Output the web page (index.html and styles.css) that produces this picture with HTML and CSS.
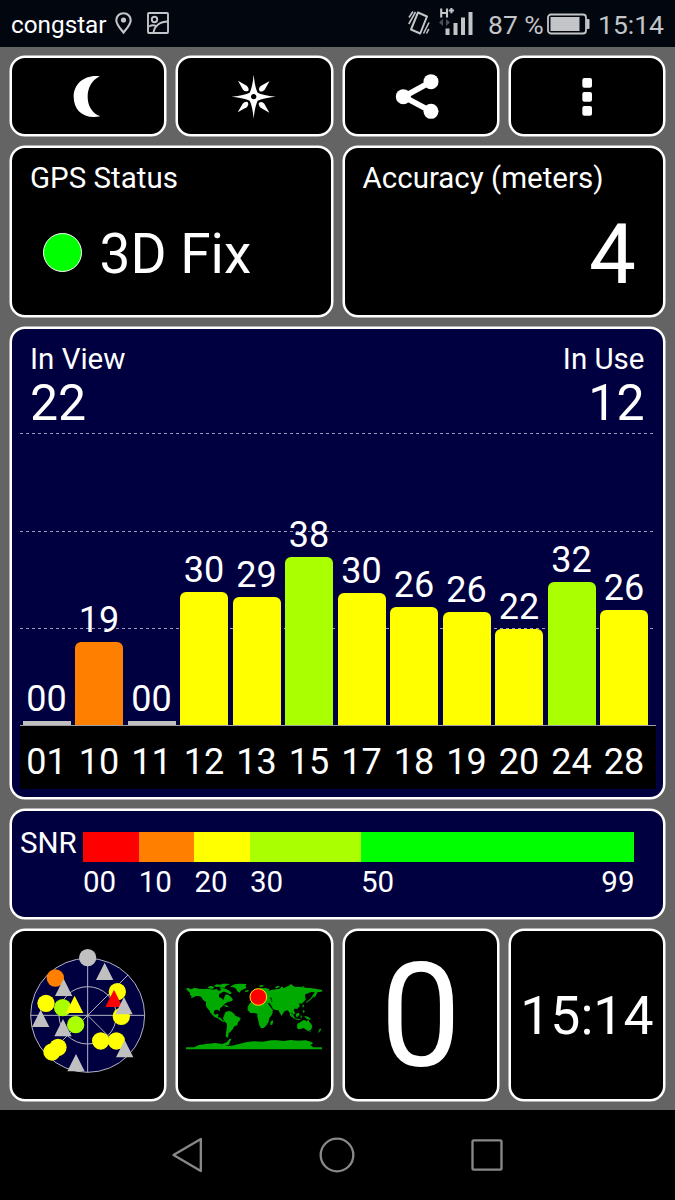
FILE: index.html
```
<!DOCTYPE html>
<html lang="en">
<head>
  <meta charset="UTF-8">
  <title>GPS Status</title>
  <link rel="stylesheet" href="styles.css">
</head>
<body>
<div class="statusbar">
  <span class="carrier">congstar</span>
  <svg class="pin" width="17" height="22" viewBox="0 0 17 22"><path d="M8.5 1.2C4.300 1.200 1.300 4.300 1.300 8.200C1.300 12.500 5 16 8.500 20.500C12 16 15.700 12.500 15.700 8.200C15.700 4.300 12.700 1.200 8.500 1.200Z" fill="none" stroke="#c3c5c8" stroke-width="2.1"/><circle cx="8.500" cy="8" r="2.600" fill="#c3c5c8"/></svg>
  <svg class="shot" width="22" height="22" viewBox="0 0 22 22"><g fill="none" stroke="#c3c5c8" stroke-width="1.900"><rect x="1" y="1" width="20" height="20" rx="1"/><circle cx="7.500" cy="7.500" r="2.700"/><path d="M6.500 20.500C7.500 14 13 9.500 21 9.500M2 14.500C5 12.800 8 13 10 15"/></g></svg>
  <div class="right">
    <svg class="vibrate" width="22" height="24" viewBox="0 0 22 24"><g fill="none" stroke="#c3c5c8" stroke-width="2" stroke-linejoin="round"><path d="M10 1.500L19 5.500L12.200 22.500L3 18.500Z"/><path d="M5 .5L1 6.500M7.500 1L.8 13M21 11.500L15.500 22.500M20.800 18L18.500 22.500" stroke-width="1.600"/></g></svg>
    <svg class="signal" width="35" height="28" viewBox="0 0 35 28"><path d="M2.200 .5V9.500M8 .5V9.500M2 5H8M9.800 2.500H15M12.400 0V5.200" fill="none" stroke="#c3c5c8" stroke-width="2.100"/><path d="M0 14.500L4 11V18ZM11 14.500L7 11V18Z" fill="#4d5157"/><path d="M6.500 20.500h4v6.500h-4zM14.500 15h4v12h-4zM22 9.500h4v17.500h-4zM29.500 4h4v23h-4z" fill="#c3c5c8"/></svg>
    <span class="percent">87 %</span>
    <svg class="battery" width="43" height="22" viewBox="0 0 43 22"><rect x="1" y="1.500" width="38" height="19" rx="3" fill="none" stroke="#c3c5c8" stroke-width="1.800"/><path d="M3.500 4h29v14h-29zM39.500 6h2a1 1 0 0 1 1 1v8a1 1 0 0 1 -1 1h-2z" fill="#c3c5c8"/></svg>
    <span class="clock">15:14</span>
  </div>
</div>

<div class="main">
  <div class="panel button">
    <svg class="icon" viewBox="194 218 140 140"><path d="M298 228C254 222 220 250 220 289C220 331 252 358 300 348C274 338 262 315 262 289C262 262 275 240 298 228Z"/></svg>
  </div>
  <div class="panel button">
    <svg class="icon" viewBox="693 218 140 140">
      <path fill-rule="evenodd" d="M761 223Q765 262 773 277Q788 285 827 289Q788 293 773 301Q765 316 761 355Q757 316 749 301Q734 293 695 289Q734 285 749 277Q757 262 761 223ZM761 281a8 8 0 1 0 .1 0Z"/>
      <path id="ray" d="M714 241L740 256Q748 263 745 271Q736 276 729 268Z"/>
      <use href="#ray" transform="rotate(90 761 289)"/>
      <use href="#ray" transform="rotate(180 761 289)"/>
      <use href="#ray" transform="rotate(270 761 289)"/>
    </svg>
  </div>
  <div class="panel button">
    <svg class="icon" viewBox="187 218 140 140"><path d="M289 244L207 289L289 333" fill="none" stroke="#fff" stroke-width="17"/><circle cx="206" cy="289" r="22.500"/><circle cx="289" cy="244" r="22.500"/><circle cx="289" cy="333" r="22.500"/></svg>
  </div>
  <div class="panel button">
    <svg class="icon" viewBox="686 218 140 140"><rect x="741" y="233" width="29" height="29" rx="6"/><rect x="741" y="275" width="29" height="29" rx="6"/><rect x="741" y="317" width="29" height="29" rx="6"/></svg>
  </div>

  <div class="panel half">
    <div class="label">GPS Status</div>
    <div class="fix"><span class="dot"></span>3D Fix</div>
  </div>
  <div class="panel half">
    <div class="label">Accuracy (meters)</div>
    <div class="accuracy">4</div>
  </div>

  <div class="panel chart">
    <div class="counts">
      <div>
        <div class="label">In View</div>
        <div class="count">22</div>
      </div>
      <div class="inuse">
        <div class="label">In Use</div>
        <div class="count">12</div>
      </div>
    </div>
    <div class="plot">
      <div class="sat">00<div class="bar none" style="height:4px"></div></div>
      <div class="sat">19<div class="bar orange" style="height:83px"></div></div>
      <div class="sat">00<div class="bar none" style="height:4px"></div></div>
      <div class="sat">30<div class="bar yellow" style="height:133.500px"></div></div>
      <div class="sat">29<div class="bar yellow" style="height:128px"></div></div>
      <div class="sat">38<div class="bar lime" style="height:168px"></div></div>
      <div class="sat">30<div class="bar yellow" style="height:132px"></div></div>
      <div class="sat">26<div class="bar yellow" style="height:118px"></div></div>
      <div class="sat">26<div class="bar yellow" style="height:113.500px"></div></div>
      <div class="sat">22<div class="bar yellow" style="height:96.500px"></div></div>
      <div class="sat">32<div class="bar lime" style="height:143px"></div></div>
      <div class="sat">26<div class="bar yellow" style="height:115px"></div></div>
    </div>
    <div class="axis">
      <span>01</span><span>10</span><span>11</span><span>12</span><span>13</span><span>15</span>
      <span>17</span><span>18</span><span>19</span><span>20</span><span>24</span><span>28</span>
    </div>
  </div>

  <div class="panel snr">
    <div class="snr-name">SNR</div>
    <div class="scale">
      <span class="seg red"></span><span class="seg orange"></span><span class="seg yellow"></span><span class="seg lime"></span><span class="seg green"></span>
      <span>00</span><span>10</span><span>20</span><span>30</span><span class="last"><span>50</span><span>99</span></span>
    </div>
  </div>

  <div class="panel tile">
    <svg width="116.670" height="136.670" viewBox="74 65 350 410">
      <circle cx="247" cy="270" r="171" fill="#000040"/>
      <g fill="none" stroke="#b4b4c4" stroke-width="3">
        <circle cx="247" cy="270" r="171"/>
        <circle cx="247" cy="270" r="86"/>
        <path d="M76 270H418M247 99V441M126 391L368 149M247 270L368 391"/>
      </g>
      <g fill="#ff0"><circle cx="336" cy="199" r="26"/><circle cx="348" cy="273" r="26"/></g>
      <circle cx="247" cy="97" r="26" fill="#c0c0c0"/>
      <circle cx="150" cy="158" r="26" fill="#ff8000"/>
      <g fill="#ff0"><circle cx="122" cy="234" r="26"/><circle cx="286" cy="347" r="26"/><circle cx="333" cy="347" r="26"/><circle cx="158" cy="366" r="26"/><circle cx="140" cy="380" r="26"/></g>
      <g fill="#aaff00"><circle cx="172" cy="247" r="26"/><circle cx="211" cy="298" r="26"/></g>
      <path d="M208 211l26 52h-52z" fill="#ff0"/>
      <path d="M326 193l26 52h-52z" fill="#f00"/>
      <path d="M298 112l26 52h-52zM175 160l26 52h-52zM106 253l26 52h-52zM173 281l26 52h-52zM356 215l26 52h-52zM358 344l26 52h-52zM212 386l26 52h-52z" fill="#c0c0c0"/>
    </svg>
  </div>
  <div class="panel tile">
    <svg class="world" width="137.330" height="68" viewBox="32 62 412 204">
      <g fill="#00aa00">
        <path d="M31 85l10-2 4 4 6-2 6-3 14 3 12 1 12-1 10 2 12 1 6-3 4 5 8 1 2-6 8 3 4 4-8 4-10 6 0 8 8 4 5 5 3-9 4-8 9 2 8 7 5 7-4 5-10 1-7 4-7 6-5 5-6 5-1 9-7-5-8 1-3 8 4 6 7-3 4 3-3 8 9 1 5 8 7 0-2 4-7-1-9-8-12-4-7-8-7-7-1-5-7-7-4-8 0-11-9-6-5-9-8-3-8 0-7 4-8 3 2-6-5-5 0-5z"/>
        <path d="M96 82l7-5 10 1 4 5-9 3zM116 76l8-4 12 1 6-3 16 0 6 2-12 4-4 6-12 0-4-3-10 1zM132 84l10-1 11 3 10 6 7 7-7 3-7-5-8-2-8-7zM168 77l10-5 14-2 22 1-3 4 2 8-6 3-9 4-6 7-6-4-5-9-7-3-9-1zM209 91l8-2 4 3-6 3-6-1zM145 134l9 1 7 6-8-1z"/>
        <path d="M151 154l10-2 8 2 8 7 3 5 8 3 8 4-2 7-6 6-2 9-9 3-5 9-7 8-5 3-1 10-3 5-5-6 1-10 2-12 1-14-8-8-4-10z"/>
        <path d="M221 132l6-6 0-10 11-1 1-7-6-2 1-10 9-7 12-5 16-1 12 4-4 6 8-4 15-2 10-1 8-8 5 6 11-6 13-4 10 6 14-1 14 3 18 1 16 2 20 4-2 5-13 2-4 10-7 6-1-9 4-7-9-1-10 3-9 4-1 8 3 7-7 7-6 6-7-1 1 9-6 7-10 0-2 5 5 9-7 4-2-7-5 3 6 13-7-6-3-10-5-6-9 2-6 9-3 6-5-8-5-9-10-2-5-1-2 6-7 6-6 2-5-9-8-10-1-6-9-2-6 2-6-4z"/>
        <path d="M222 131l13-5 14 0 7 4 9-1 12 3 5 12 7 10 4 0-4 11-7 8-2 11-6 10-8 9-9 1-5-9-3-14-3-12 0-9-9-2-12 0-8-9 0-10zM290 180l4 2-3 11-6 1 0-8zM228 107l4-8 3 5 3 8-9 2zM249 76l12-2 5 3-9 4zM299 80l10-4 5 2-10 7zM340 74l9-2 4 4-8 1zM376 80l9-2 5 3-8 1z"/>
        <path d="M414 101l3 0-5 11-7 7-11 8-2-2 11-8 6-7zM382 132l4 3-2 7-3-3zM384 149l5 4-4 5-3-4zM347 158l5 3 7 12-3 2-8-9zM362 160l8-3 3 5-6 8-6-2zM357 174l14 2 8 2-10 1-12-3zM377 164l3 4-2 7-3-5zM388 167l10 2 8 6-1 3-10-2-7-6z"/>
        <path d="M366 190l10-5 7-5 7 0 4 4 4-7 4 8 6 6 3 8-4 10-8 3-7-4-7-5-9 3-8 1-3-6zM402 212l4 0-2 5zM434 204l4 3-4 6-7 6 4-9z"/>
        <path d="M32 261H440V267H32ZM52 263l18-9 22-3 27-3 22 3 14-6 8-10 5 1-4 9-3 8-12 4 20-1 22-5 20-5 22-3 28 1 27-4 18 0 18 2 22-3 22 2 23-1 18 5 4 5-8 4 8 6 3 4z"/>
      </g>
      <circle cx="249" cy="110" r="25" fill="#f00" stroke="#ffe600" stroke-width="3"/>
      <path d="M284 110l5 4-1 12 4-3-5-4zM277 129l15 20 2-1-10-19z" fill="#000"/>
    </svg>
  </div>
  <div class="panel tile speed">0</div>
  <div class="panel tile time">15:14</div>
</div>

<div class="navbar">
  <svg viewBox="52.500 105 120 120"><path d="M72 165L154 117V213Z"/></svg>
  <svg viewBox="502.500 105 120 120"><circle cx="562.500" cy="165" r="49"/></svg>
  <svg viewBox="952.500 105 120 120"><rect x="969" y="121" width="87" height="88" rx="4"/></svg>
</div>
</body>
</html>
```
FILE: styles.css
```
* {
  box-sizing: border-box;
}
body {
  margin: 0;
  width: 675px;
  height: 1200px;
  background: #000;
  color: #fff;
  font-family: Roboto, "Liberation Sans", sans-serif;
  font-size: 29.5px;
  overflow: hidden;
}
svg {
  display: block;
  overflow: visible;
  flex: none;
}

/* status bar */
.statusbar {
  display: flex;
  height: 47px;
  padding: 0 11px;
  background: #02060f;
  font-size: 26.5px;
  line-height: 49px;
  white-space: nowrap;
}
.carrier {
  width: 104px;
  font-size: 24.3px;
  line-height: 50px;
}
.pin {
  margin-top: 12px;
}
.shot {
  margin: 12px 0 0 15px;
}
.right {
  display: flex;
  margin-left: auto;
  color: #c3c5c8;
}
.vibrate {
  margin: 11px 9px 0 0;
}
.signal {
  margin: 8px 14px 0 0;
}
.percent {
  width: 59px;
}
.battery {
  margin: 13px 8px 0 0;
}

/* panels */
.main {
  display: grid;
  grid-template-columns: repeat(4, 1fr);
  grid-template-rows: 80px 171px 472px 110px 172px;
  gap: 10px;
  height: 1063px;
  padding: 9px 10px;
  background: #646464;
}
.panel {
  background: #000;
  border: 2px solid #fff;
  border-radius: 15px;
  box-shadow: 0 0 0 .5px #fff;
}
.button, .tile {
  display: flex;
  align-items: center;
  justify-content: center;
}
.icon {
  width: 46.67px;
  height: 46.67px;
  fill: #fff;
}
.half {
  grid-column: span 2;
  padding: 12px 27px 0 18px;
}
.label {
  line-height: 36px;
}
.fix {
  display: flex;
  align-items: center;
  margin-top: 26px;
  font-size: 55px;
  line-height: 64px;
}
.dot {
  width: 39px;
  height: 39px;
  margin: 0 18px 3px 12.5px;
  background: #0f0;
  border: 1px solid #fff;
  border-radius: 50%;
}
.accuracy {
  margin-top: 17px;
  font-size: 83.5px;
  line-height: 84px;
  text-align: right;
}

/* satellites */
.chart, .snr {
  grid-column: span 4;
  background: #000040;
}
.chart {
  padding: 12px 7.5px 0;
}
.counts {
  display: flex;
  justify-content: space-between;
  height: 86px;
  padding: 0 11px 0 10.5px;
}
.inuse {
  text-align: right;
}
.count {
  margin-top: 2px;
  font-size: 50px;
  line-height: 48px;
}
.plot {
  --dash: repeating-linear-gradient(90deg, #9c9cb4 0 3px, transparent 3px 6px);
  display: flex;
  align-items: flex-end;
  gap: 4.5px;
  height: 299px;
  padding-left: 3px;
  border-bottom: 1px solid #a0a0a0;
  background: var(--dash) 0 6px / 635px 1px no-repeat, var(--dash) 0 104px / 635px 1px no-repeat, var(--dash) 0 201px / 635px 1px no-repeat;
}
.sat {
  width: 48px;
  font-size: 36px;
  line-height: 42px;
  text-align: center;
}
.bar {
  margin-top: 1px;
  border-radius: 6px 6px 0 0;
}
.none {
  background: #c0c0c0;
  border-radius: 0;
}
.red {
  background: #f00;
}
.orange {
  background: #ff8000;
}
.yellow {
  background: #ff0;
}
.lime {
  background: #af0;
}
.green {
  background: #0f0;
}
.axis {
  display: flex;
  gap: 4.5px;
  height: 63px;
  padding: 7px 0 0 3px;
  background: #000;
  font-size: 36px;
  line-height: 59px;
  text-align: center;
}
.axis span {
  width: 48px;
}

/* signal scale */
.snr {
  display: flex;
  padding: 21px 0 0 8px;
}
.snr-name {
  width: 63px;
  line-height: 22px;
}
.scale {
  display: grid;
  grid-template-columns: 55.7px 55.7px 55.6px 111px 273.5px;
  grid-template-rows: 30px 36px;
  row-gap: 2px;
  line-height: 36px;
}
.last {
  display: flex;
  justify-content: space-between;
}

.speed {
  padding-top: 3px;
  font-size: 144px;
}
.time {
  font-size: 53.5px;
}

/* navigation */
.navbar {
  display: flex;
  justify-content: center;
  align-items: center;
  gap: 110px;
  height: 90px;
  padding-right: 1px;
}
.navbar svg {
  width: 40px;
  height: 40px;
  fill: none;
  stroke: #888;
  stroke-width: 7;
  stroke-linejoin: round;
}
```
